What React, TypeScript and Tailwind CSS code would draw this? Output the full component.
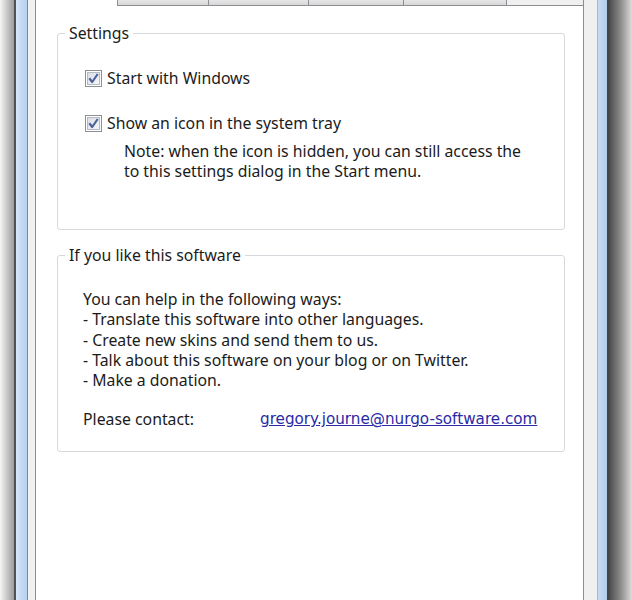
import React from 'react';

const ui = { fontFamily: '"Noto Sans", "Open Sans", sans-serif' };
const mono = { fontFamily: '"DejaVu Sans", sans-serif' };

function Check() {
  return (
    <svg width="17" height="17" viewBox="0 0 17 17" className="shrink-0">
      <defs>
        <linearGradient id="cbfill" x1="0" y1="0" x2="1" y2="1">
          <stop offset="0" stopColor="#d9dde4" />
          <stop offset="1" stopColor="#f7f8fa" />
        </linearGradient>
      </defs>
      <rect x="0.5" y="0.5" width="16" height="16" fill="#fff" stroke="#8e8f8f" />
      <rect x="2.5" y="2.5" width="12" height="12" fill="url(#cbfill)" stroke="#b5bac4" />
      <path d="M4.3 8.3 L7.2 12 L12.7 4" fill="none" stroke="#4d619a" strokeWidth="2.2" strokeLinejoin="round" />
    </svg>
  );
}

function CheckRow({ label }: { label: string }) {
  return (
    <div className="flex items-center gap-[5px] h-[20px]">
      <Check />
      <span>{label}</span>
    </div>
  );
}

const tabs = [91, 100, 95, 103];

export default function App() {
  return (
    <div className="flex h-[600px] w-[632px] overflow-hidden bg-white text-[15.8px] leading-[20px] text-[#1b1b1b]" style={ui}>
      {/* left shadow + frame */}
      <div className="w-[14px] bg-gradient-to-r from-[#f6f6f6] to-[#9c9c9c]" />
      <div className="w-[2px] bg-[#4e5256]" />
      <div className="w-[11px] bg-gradient-to-r from-[#d8e7f8] via-[#c3d9f3] to-[#b9d1ee]" />
      <div className="w-[1px] bg-[#7d8a99]" />
      <div className="w-[7px] bg-[#f0f0f0]" />

      {/* tab control */}
      <div className="flex w-[549px] flex-col">
        <div className="flex h-[6px]">
          <div className="w-[82px] border-l border-[#8c8e94] bg-white" />
          {tabs.map((w, i) => (
            <div
              key={i}
              style={{ width: w }}
              className="border-b border-l border-[#8c8e94] bg-gradient-to-b from-[#e6e6e6] to-[#d7d7d7]"
            />
          ))}
          <div className="flex-1 border-b border-l border-r border-[#8c8e94] bg-[#f0f0f0]" />
        </div>
        <div className="flex-1 border-l border-r border-[#8c8e94] bg-white pl-[21px] pt-[17px]">
          <fieldset className="w-[508px] rounded-[3px] border border-[#d5d9dd] pb-[48px] pl-[27px]">
            <legend className="ml-[-20px] px-[4px] leading-[20px]">Settings</legend>
            <div className="mt-[25px]">
              <CheckRow label="Start with Windows" />
            </div>
            <div className="mt-[25px]">
              <CheckRow label="Show an icon in the system tray" />
            </div>
            <div className="mt-[8px] pl-[39px] leading-[20px]">
              <div>Note: when the icon is hidden, you can still access the</div>
              <div>to this settings dialog in the Start menu.</div>
            </div>
          </fieldset>

          <fieldset className="mt-[15px] w-[508px] rounded-[3px] border border-[#d5d9dd] pb-[22px] pl-[25px]">
            <legend className="ml-[-18px] px-[4px] leading-[20px]">If you like this software</legend>
            <div className="mt-[24px] leading-[20.3px]">
              <div>You can help in the following ways:</div>
              <div>- Translate this software into other languages.</div>
              <div>- Create new skins and send them to us.</div>
              <div>- Talk about this software on your blog or on Twitter.</div>
              <div>- Make a donation.</div>
            </div>
            <div className="mt-[19px] flex">
              <span className="w-[177px]">Please contact:</span>
              <a href="#" className="text-[15.2px] text-[#2a2aa6] underline" style={mono}>
                gregory.journe@nurgo-software.com
              </a>
            </div>
          </fieldset>
        </div>
      </div>

      {/* right frame + shadow */}
      <div className="w-[13px] bg-[#f0f0f0]" />
      <div className="w-[1px] bg-[#a9b8c9]" />
      <div className="w-[9px] bg-gradient-to-r from-[#c6dbf4] to-[#b3ccea]" />
      <div className="w-[2px] bg-[#3f4246]" />
      <div className="flex-1 bg-gradient-to-r from-[#4a4a4a] via-[#8c8c8c] to-[#dcdcdc]" />
    </div>
  );
}
